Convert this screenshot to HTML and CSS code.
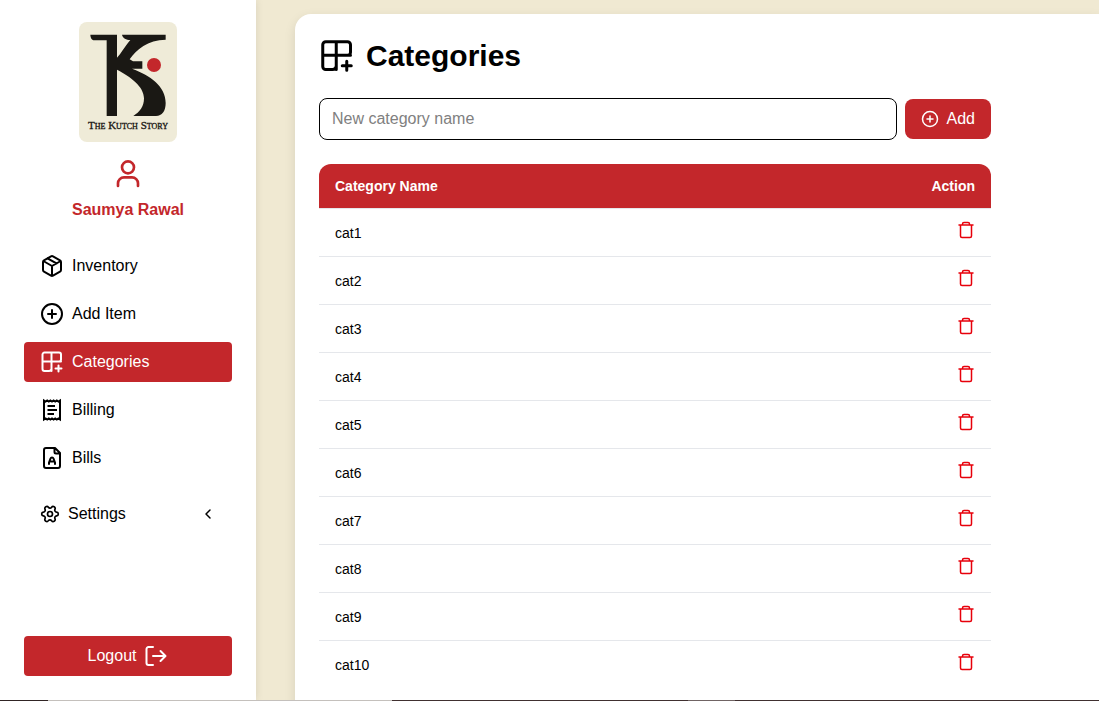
FILE: index.html
```html
<!DOCTYPE html>
<html lang="en">
<head>
    <meta charset="UTF-8">
    <meta name="viewport" content="width=device-width, initial-scale=1.0">
    <title>Categories - The Kutch Story</title>
    <link rel="stylesheet" href="styles.css">
</head>
<body>
    <!-- Shared icons -->
    <svg class="icon-defs" aria-hidden="true">
        <symbol id="icon-category-plus" viewBox="0 0 24 24">
            <path d="M11.500 2.500v18.500M2.500 11.500H21M11.500 12v6.500a2.500 2.500 0 0 1-2.500 2.500H4.500a2 2 0 0 1-2-2v-14.500a2 2 0 0 1 2-2H19a2 2 0 0 1 2 2v5a2 2 0 0 1-2 2M18.500 15.500v6M21.500 18.500h-6"/>
        </symbol>
        <symbol id="icon-circle-plus" viewBox="0 0 24 24">
            <circle cx="12" cy="12" r="10"/>
            <path d="M12 8v8M8 12h8"/>
        </symbol>
        <symbol id="icon-trash" viewBox="0 0 20 20">
            <path d="M4 5h14M7.500 5V4a1.500 1.500 0 0 1 1.500-1.500h4A1.500 1.500 0 0 1 14.500 4v1M5.500 5v11A1.500 1.500 0 0 0 7 17.500h8a1.500 1.500 0 0 0 1.500-1.500V5"/>
        </symbol>
    </svg>

    <div class="app">
        <!-- Sidebar -->
        <aside class="sidebar">
            <svg class="logo" viewBox="27 21 294 360" role="img" aria-label="The Kutch Story">
                <rect x="27" y="21" width="294" height="360" rx="24" fill="#efebd8"/>
                <path fill="#1a1814" d="M61 59H141V128C153 116 164 95 181 75C169 74 158 70 156 59H287V74C233 75 199 104 179 133L189 139H217V161H186C240 181 287 213 287 264C287 288 276 303 258 303H190C209 291 222 275 222 250C222 214 181 185 141 164V303H110V76H73C66 75 62 71 61 59Z"/>
                <circle cx="252" cy="150" r="21" fill="#c3272b"/>
                <text class="logo-text" x="174" y="342" text-anchor="middle">The Kutch Story</text>
            </svg>
            <svg class="icon user-icon" viewBox="0 0 24 24">
                <circle cx="12" cy="7" r="4.500"/>
                <path d="M19.500 21v-2a4.500 4.500 0 0 0-4.500-4.500H9A4.500 4.500 0 0 0 4.500 19v2"/>
            </svg>
            <p class="user-name">Saumya Rawal</p>

            <nav class="menu">
                <a href="#inventory" class="menu-item">
                    <svg class="icon" viewBox="0 0 24 24">
                        <path d="M21 8a2 2 0 0 0-1-1.730l-7-4a2 2 0 0 0-2 0l-7 4A2 2 0 0 0 3 8v8a2 2 0 0 0 1 1.730l7 4a2 2 0 0 0 2 0l7-4A2 2 0 0 0 21 16ZM3.300 7 12 12l8.700-5M12 22V12M7.500 4.270l9 5.150"/>
                    </svg>
                    Inventory
                </a>
                <a href="#add-item" class="menu-item">
                    <svg class="icon"><use href="#icon-circle-plus"/></svg>
                    Add Item
                </a>
                <a href="#categories" class="menu-item active">
                    <svg class="icon"><use href="#icon-category-plus"/></svg>
                    Categories
                </a>
                <a href="#billing" class="menu-item">
                    <svg class="icon icon-square" viewBox="0 0 24 24">
                        <path d="M4 2.500v19l1.600-1 1.600 1 1.600-1 1.600 1 1.600-1 1.600 1 1.600-1 1.600 1 1.600-1L20 21.500v-19l-1.600 1-1.600-1-1.600 1-1.600-1-1.600 1-1.600-1-1.600 1-1.600-1-1.600 1ZM7.500 8H15M7.500 12H17M7.500 16H14"/>
                    </svg>
                    Billing
                </a>
                <a href="#bills" class="menu-item">
                    <svg class="icon" viewBox="0 0 24 24">
                        <path d="M15 2H6a2 2 0 0 0-2 2v16a2 2 0 0 0 2 2h12a2 2 0 0 0 2-2V7ZM14.500 2v4a1.500 1.500 0 0 0 1.500 1.500h4M9 18v-1.500l1.500-4a1.600 1.600 0 0 1 3 0l1.500 4V18M10 15.500h4"/>
                    </svg>
                    Bills
                </a>
                <button type="button" class="menu-item settings">
                    <svg class="icon icon-small" viewBox="0 0 24 24">
                        <g transform="rotate(30 12 12)">
                            <path d="M9.671 4.136a2.340 2.340 0 0 1 4.659 0 2.340 2.340 0 0 0 3.319 1.915 2.340 2.340 0 0 1 2.330 4.033 2.340 2.340 0 0 0 0 3.831 2.340 2.340 0 0 1-2.330 4.033 2.340 2.340 0 0 0-3.319 1.915 2.340 2.340 0 0 1-4.659 0 2.340 2.340 0 0 0-3.320-1.915 2.340 2.340 0 0 1-2.330-4.033 2.340 2.340 0 0 0 0-3.831A2.340 2.340 0 0 1 6.350 6.051a2.340 2.340 0 0 0 3.321-1.915"/>
                        </g>
                        <circle cx="12" cy="12" r="3"/>
                    </svg>
                    Settings
                    <svg class="icon chevron" viewBox="0 0 16 16"><path d="m10 4-4 4 4 4"/></svg>
                </button>
            </nav>

            <button type="button" class="btn logout">
                Logout
                <svg class="icon" viewBox="0 0 24 24">
                    <path d="M9 3H4.500a2 2 0 0 0-2 2v14a2 2 0 0 0 2 2H9M9 12h12M16.500 7l5 5-5 5"/>
                </svg>
            </button>
        </aside>

        <!-- Main content -->
        <main class="main">
            <section class="card">
                <div class="content">
                    <h1>
                        <svg class="icon title-icon"><use href="#icon-category-plus"/></svg>
                        Categories
                    </h1>

                    <form class="add-form" onsubmit="addCategory(event)">
                        <input type="text" id="categoryName" placeholder="New category name" aria-label="New category name">
                        <button type="submit" class="btn add-btn">
                            <svg class="icon add-icon"><use href="#icon-circle-plus"/></svg>
                            Add
                        </button>
                    </form>

                    <table>
                        <thead>
                            <tr>
                                <th>Category Name</th>
                                <th class="action">Action</th>
                            </tr>
                        </thead>
                        <tbody id="categoryList"></tbody>
                    </table>
                </div>
            </section>
        </main>
        <footer class="bottom-strip"></footer>
    </div>

    <script>
        let categories = ["cat1", "cat2", "cat3", "cat4", "cat5", "cat6", "cat7", "cat8", "cat9", "cat10"];

        function showCategories() {
            const list = document.getElementById("categoryList");
            list.innerHTML = "";
            categories.forEach((name, index) => {
                const row = list.insertRow();
                row.insertCell().textContent = name;
                const action = row.insertCell();
                action.className = "action";
                action.innerHTML = `<button type="button" class="delete-btn" aria-label="Delete" onclick="deleteCategory(${index})">
                    <svg class="icon"><use href="#icon-trash"/></svg></button>`;
            });
        }

        function addCategory(event) {
            event.preventDefault();
            const input = document.getElementById("categoryName");
            if (input.value.trim()) {
                categories.push(input.value.trim());
                input.value = "";
                showCategories();
            }
        }

        function deleteCategory(index) {
            categories.splice(index, 1);
            showCategories();
        }

        showCategories();
    </script>
</body>
</html>
```
FILE: styles.css
```css
* {
    box-sizing: border-box;
}
body {
    margin: 0;
    font-family: Arial, "Liberation Sans", sans-serif;
    font-size: 16px;
    line-height: 24px;
    color: #000;
    background: #f0e9d2;
}
button, input {
    font: inherit;
}
button {
    border: none;
    cursor: pointer;
}
.icon-defs {
    display: none;
}
.icon {
    width: 24px;
    height: 24px;
    flex-shrink: 0;
    fill: none;
    stroke: currentColor;
    stroke-width: 2;
    stroke-linecap: round;
    stroke-linejoin: round;
}
.icon-small {
    width: 20px;
    height: 20px;
}
.icon-square {
    stroke-linecap: butt;
    stroke-linejoin: miter;
}
.app {
    display: grid;
    grid-template-columns: 256px 1fr;
    grid-template-rows: minmax(0, 1fr) 1px;
    height: 100vh;
}

/* Sidebar */
.sidebar {
    display: flex;
    flex-direction: column;
    align-items: center;
    padding: 22px 24px 24px;
    background: #fff;
    box-shadow: 0 0 8px rgba(0, 0, 0, 0.1);
}
.logo {
    width: 98px;
    height: 120px;
    flex-shrink: 0;
}
.logo-text {
    font-family: "Liberation Serif", serif;
    font-size: 33px;
    font-variant: small-caps;
    fill: #1a1814;
    stroke: #1a1814;
}
.user-icon {
    width: 32px;
    height: 32px;
    margin-top: 16px;
    color: #c3272b;
}
.user-name {
    margin: 8px 0 24px;
    font-weight: bold;
    color: #c3272b;
}
.menu {
    display: flex;
    flex-direction: column;
    gap: 8px;
    width: 100%;
}
.menu-item {
    display: flex;
    align-items: center;
    gap: 8px;
    width: 100%;
    padding: 8px 16px;
    border-radius: 4px;
    color: #000;
    background: none;
    text-decoration: none;
}
.menu-item.active {
    color: #fff;
    background: #c3272b;
}
.settings {
    margin-top: 8px;
}
.chevron {
    width: 16px;
    height: 16px;
    margin-left: auto;
    stroke-width: 1.5;
}
.btn {
    display: flex;
    align-items: center;
    justify-content: center;
    gap: 8px;
    padding: 8px 16px;
    color: #fff;
    background: #c3272b;
}
.logout {
    width: 100%;
    margin-top: auto;
    border-radius: 4px;
}

/* Main content */
.main {
    overflow-y: auto;
    scrollbar-width: none;
    padding: 14px 0 0 39px;
}
.card {
    min-height: 100%;
    padding: 24px;
    border-radius: 16px 0 0 0;
    background: #fff;
    box-shadow: 0 4px 12px rgba(0, 0, 0, 0.1);
}
.content {
    max-width: 672px;
}
h1 {
    display: flex;
    align-items: center;
    gap: 11px;
    margin: 0 0 24px;
    font-size: 30px;
    line-height: 36px;
}
.title-icon {
    width: 36px;
    height: 36px;
}
.add-form {
    display: flex;
    align-items: center;
    gap: 8px;
    margin-bottom: 24px;
}
.add-form input {
    flex: 1;
    min-width: 0;
    height: 42px;
    padding: 8px 12px;
    border: 1px solid #000;
    border-radius: 8px;
    background: #fff;
}
.add-form input::placeholder {
    color: #808080;
}
.add-btn {
    border-radius: 8px;
}
.add-icon {
    width: 18px;
    height: 18px;
}
table {
    width: 100%;
    border-spacing: 0;
    font-size: 14px;
    line-height: 20px;
}
th {
    padding: 12px 16px;
    text-align: left;
    color: #fff;
    background: #c3272b;
}
th:first-child {
    border-top-left-radius: 12px;
}
th:last-child {
    border-top-right-radius: 12px;
}
td {
    padding: 14px 16px 13px;
    border-top: 1px solid #e5e7eb;
    vertical-align: top;
}
.action {
    text-align: right;
}
td.action {
    padding-top: 11px;
}
.delete-btn {
    padding: 0;
    vertical-align: top;
    color: #e7000b;
    background: none;
}
.delete-btn .icon {
    display: block;
    width: 20px;
    height: 20px;
    stroke-width: 1.5;
}
.bottom-strip {
    grid-column: 1 / -1;
    background: linear-gradient(to right, #302424 48px, #c4c0bc 48px 392px, #403030 392px 688px, #706464 688px 735px, #403030 735px);
}
```
